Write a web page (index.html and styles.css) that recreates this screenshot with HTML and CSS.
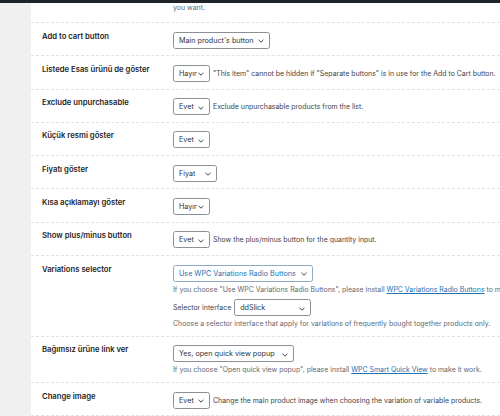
FILE: index.html
```html
<!DOCTYPE html>
<html lang="tr">
<head>
<meta charset="utf-8">
<title>Ayarlar</title>
<link rel="stylesheet" href="styles.css">
</head>
<body>
<div class="adminbar"></div>
<div class="layout">
  <aside class="sidemenu"></aside>
  <main class="settings">
    <div class="lead">you want.</div>

    <div class="row">
      <div class="label">Add to cart button</div>
      <div class="field">
        <span class="select w-main">Main product's button<svg class="chev" viewBox="0 0 6 4"><path d="M0.5 0.8 L3 3.2 L5.5 0.8"/></svg></span>
      </div>
    </div>

    <div class="row">
      <div class="label">Listede Esas ürünü de göster</div>
      <div class="field">
        <span class="select w-short">Hayır<svg class="chev" viewBox="0 0 6 4"><path d="M0.5 0.8 L3 3.2 L5.5 0.8"/></svg></span>
        <span class="note">"This item" cannot be hidden if "Separate buttons" is in use for the Add to Cart button.</span>
      </div>
    </div>

    <div class="row">
      <div class="label">Exclude unpurchasable</div>
      <div class="field">
        <span class="select w-short">Evet<svg class="chev" viewBox="0 0 6 4"><path d="M0.5 0.8 L3 3.2 L5.5 0.8"/></svg></span>
        <span class="note">Exclude unpurchasable products from the list.</span>
      </div>
    </div>

    <div class="row">
      <div class="label">Küçük resmi göster</div>
      <div class="field">
        <span class="select w-short">Evet<svg class="chev" viewBox="0 0 6 4"><path d="M0.5 0.8 L3 3.2 L5.5 0.8"/></svg></span>
      </div>
    </div>

    <div class="row">
      <div class="label">Fiyatı göster</div>
      <div class="field">
        <span class="select w-price">Fiyat<svg class="chev" viewBox="0 0 6 4"><path d="M0.5 0.8 L3 3.2 L5.5 0.8"/></svg></span>
      </div>
    </div>

    <div class="row">
      <div class="label">Kısa açıklamayı göster</div>
      <div class="field">
        <span class="select w-short">Hayır<svg class="chev" viewBox="0 0 6 4"><path d="M0.5 0.8 L3 3.2 L5.5 0.8"/></svg></span>
      </div>
    </div>

    <div class="row">
      <div class="label">Show plus/minus button</div>
      <div class="field">
        <span class="select w-short">Evet<svg class="chev" viewBox="0 0 6 4"><path d="M0.5 0.8 L3 3.2 L5.5 0.8"/></svg></span>
        <span class="note">Show the plus/minus button for the quantity input.</span>
      </div>
    </div>

    <div class="row">
      <div class="label">Variations selector</div>
      <div class="field stack">
        <span class="select select-active w-variations">Use WPC Variations Radio Buttons<svg class="chev" viewBox="0 0 6 4"><path d="M0.5 0.8 L3 3.2 L5.5 0.8"/></svg></span>
        <p class="desc">If you choose "Use WPC Variations Radio Buttons", please install <a href="#">WPC Variations Radio Buttons</a> to make it work.</p>
        <div class="inline-field">
          <span class="inline-label">Selector interface</span>
          <span class="select w-interface">ddSlick<svg class="chev" viewBox="0 0 6 4"><path d="M0.5 0.8 L3 3.2 L5.5 0.8"/></svg></span>
        </div>
        <p class="desc">Choose a selector interface that apply for variations of frequently bought together products only.</p>
      </div>
    </div>

    <div class="row">
      <div class="label">Bağımsız ürüne link ver</div>
      <div class="field stack">
        <span class="select w-link">Yes, open quick view popup<svg class="chev" viewBox="0 0 6 4"><path d="M0.5 0.8 L3 3.2 L5.5 0.8"/></svg></span>
        <p class="desc">If you choose "Open quick view popup", please install <a href="#">WPC Smart Quick View</a> to make it work.</p>
      </div>
    </div>

    <div class="row">
      <div class="label">Change image</div>
      <div class="field">
        <span class="select w-short">Evet<svg class="chev" viewBox="0 0 6 4"><path d="M0.5 0.8 L3 3.2 L5.5 0.8"/></svg></span>
        <span class="note">Change the main product image when choosing the variation of variable products.</span>
      </div>
    </div>
  </main>
</div>
</body>
</html>
```

FILE: styles.css
```css
* {
  box-sizing: border-box;
}

html,
body {
  margin: 0;
  padding: 0;
  height: 100%;
  overflow: hidden;
  background: #ffffff;
  font-family: Inter, "Liberation Sans", Arial, sans-serif;
  color: #3c434a;
}

.adminbar {
  height: 3px;
  background: #1d2327;
}

.layout {
  display: flex;
  min-height: calc(100% - 3px);
}

.sidemenu {
  flex: 0 0 31px;
  background: #f0f0f1;
}

.settings {
  flex: 1;
  min-width: 0;
  white-space: nowrap;
}

.lead {
  height: 20px;
  padding-left: 142px;
  font-size: 6.95px;
  line-height: 10px;
  color: #646970;
  border-bottom: 1px dashed #e2e2e4;
}

.row {
  display: grid;
  grid-template-columns: 142px 1fr;
  border-bottom: 1px dashed #e2e2e4;
}

.label {
  padding: 8.5px 0 0 11px;
  font-size: 7.7px;
  font-weight: 600;
  line-height: 10px;
  color: #1d2327;
}

.field {
  display: flex;
  align-items: center;
  gap: 3px;
  padding: 8.5px 0 6.8px;
  font-size: 6.95px;
  line-height: 11px;
}

.field.stack {
  flex-direction: column;
  align-items: flex-start;
  gap: 0;
}

.select {
  position: relative;
  display: inline-flex;
  align-items: center;
  flex: none;
  height: 17px;
  padding: 0 14px 0 5px;
  border: 1px solid #8c8f94;
  border-radius: 2.5px;
  background: #ffffff;
  color: #2c3338;
  font-size: 7.2px;
}

.select-active {
  color: #2271b1;
  border-color: #8fa9c2;
}

.chev {
  position: absolute;
  right: 5px;
  top: 6.5px;
  width: 6px;
  height: 4px;
}

.chev path {
  fill: none;
  stroke: #2c3338;
  stroke-width: 0.9;
}

.w-short { width: 37px; }
.w-price { width: 44px; }
.w-main { width: 97px; }
.w-variations { width: 140px; }
.w-interface { width: 77px; }
.w-link { width: 121px; }

.note {
  color: #3c434a;
}

.desc {
  margin: 2px 0 0;
  color: #646970;
  font-size: 6.95px;
  line-height: 11px;
}

.desc a {
  color: #2271b1;
  text-decoration: underline;
}

.inline-field {
  display: flex;
  align-items: center;
  gap: 3px;
  margin-top: 4.5px;
}

.inline-label {
  color: #3c434a;
}
```
